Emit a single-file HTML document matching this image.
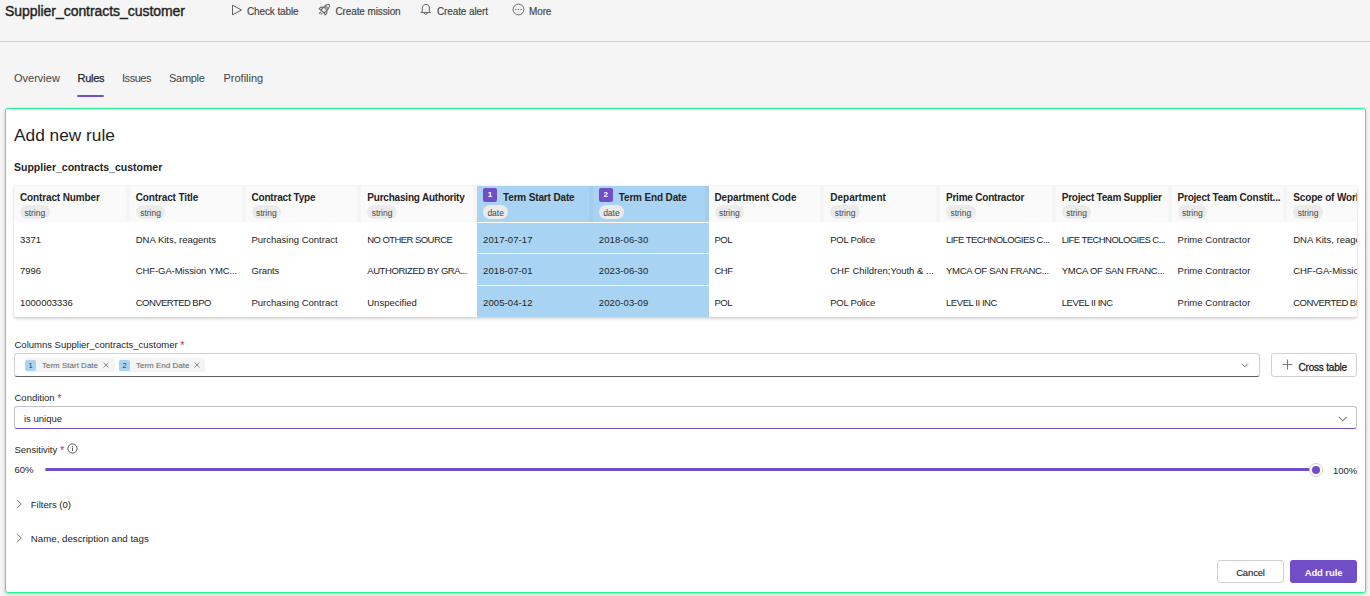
<!DOCTYPE html>
<html><head><meta charset="utf-8">
<style>
*{box-sizing:border-box;margin:0;padding:0}
html,body{width:1370px;height:596px;overflow:hidden;background:#f5f5f5;font-family:"Liberation Sans",sans-serif;color:#242424}
.a{position:absolute;white-space:nowrap}
.title{left:5px;top:1px;font-size:14px;font-weight:400;letter-spacing:-0.05px;-webkit-text-stroke:0.4px #242424;color:#242424;line-height:20px}
.tb{font-size:10px;color:#424242;top:4.8px;line-height:14px;letter-spacing:-0.12px;-webkit-text-stroke:0.15px #424242}
.hline{left:0;top:41px;width:1370px;height:1px;background:#d1d1d1}
.tab{font-size:11px;color:#424242;top:70px;line-height:16px}
.card{left:5px;top:108px;width:1361px;height:485px;border:1px solid #25f68d;border-radius:3px;background:#fff;box-shadow:0 0 2px rgba(0,0,0,.12),0 2px 4px rgba(0,0,0,.12)}
.h1{left:14px;top:124px;font-size:17.3px;line-height:22px;color:#242424}
.h2{left:14px;top:160px;font-size:10.5px;font-weight:700;line-height:14px;letter-spacing:0}
.tbl{left:14px;top:186px;width:1343px;height:131px;overflow:hidden;border-radius:2px;box-shadow:0 1.5px 3px rgba(0,0,0,.16),0 0 2px rgba(0,0,0,.10);background:#fff}
.col{position:absolute;top:0;width:115.75px;height:131px}
.hd{position:absolute;left:0;top:0;width:100%;height:36px;background:#fafafa}
.sep{position:absolute;right:0;top:0;width:4px;height:36px;background:#f5f5f5}
.sel .hd{background:#a9d3f2}
.sel .sep{background:#a2cdef}
.cn{position:absolute;left:6px;top:5px;font-size:10px;font-weight:700;line-height:14px;letter-spacing:-0.12px;white-space:nowrap;color:#242424}
.pill{position:absolute;left:6px;top:19px;height:14px;border-radius:7px;background:#ebebeb;font-size:8.5px;color:#474747;line-height:16px;padding:0 4.4px;white-space:nowrap}
.sel .pill{background:#ebebeb}
.bdg{position:absolute;left:6px;top:2px;width:14px;height:14px;border-radius:2px;background:#6f4ec8;color:#fff;font-size:8px;font-weight:700;line-height:14px;text-align:center}
.sel .cn{left:26px}
.r{position:absolute;left:0;width:100%;height:30px}
.sel .r{background:#a9d3f2}
.c{position:absolute;left:6px;top:2px;font-size:9.5px;line-height:30px;white-space:nowrap;color:#242424}
.lbl{font-size:9.5px;line-height:12px;color:#242424}
.req{color:#c4314b;font-size:11px;line-height:10px;position:relative;top:0.5px}
.inp{border:1px solid #d1d1d1;border-bottom-color:#616161;border-radius:3px;background:#fff}
.chip{position:absolute;top:4px;height:14px;background:#f4f4f4;border-radius:3px}
.cb{position:absolute;left:0;top:2px;width:11px;height:10.5px;background:#a9d3f2;border-radius:2px;font-size:7.5px;color:#0f3a66;text-align:center;line-height:11.5px}
.ct{position:absolute;left:17px;top:0;font-size:8px;color:#616161;line-height:16px;white-space:nowrap}
.btn{border:1px solid #d1d1d1;border-radius:3px;background:#fff}
</style></head><body>
<div class="a title">Supplier_contracts_customer</div>

<!-- toolbar -->
<svg class="a" style="left:231px;top:4px" width="12" height="12" viewBox="0 0 12 12"><path d="M1.5 1.2 L10.5 6 L1.5 10.8 Z" fill="none" stroke="#616161" stroke-width="1" stroke-linejoin="round"/></svg>
<div class="a tb" style="left:247px">Check table</div>
<svg class="a" style="left:315px;top:0px" width="20" height="20" viewBox="0 0 20 20"><g fill="none" stroke="#5a5a5a" stroke-width="0.95" stroke-linejoin="round" stroke-linecap="round" transform="rotate(45 10.3 8.7)"><path d="M8 12.6 L8 7.6 C8 5.2 9 3.8 10.3 3 C11.6 3.8 12.6 5.2 12.6 7.6 L12.6 12.6 Z"/><path d="M8 9 L6 10.8 L6 13.2 L8 12.6 M12.6 9 L14.6 10.8 L14.6 13.2 L12.6 12.6"/><circle cx="10.3" cy="7.6" r="1.2"/><path d="M9.4 14.2 L9.4 16.4 M11.2 14.2 L11.2 15.6"/></g></svg>
<div class="a tb" style="left:335.5px">Create mission</div>
<svg class="a" style="left:415px;top:0px" width="20" height="20" viewBox="0 0 20 20"><g fill="none" stroke="#5a5a5a" stroke-width="0.95" stroke-linejoin="round" stroke-linecap="round"><path d="M7.3 11.3 L7.3 8.1 C7.3 5.9 8.8 4.4 10.8 4.4 C12.8 4.4 14.4 5.9 14.4 8.1 L14.4 11.3 L15.5 12.6 L6.2 12.6 Z"/><path d="M9.4 13.5 C9.7 14.7 11.9 14.7 12.2 13.5"/></g></svg>
<div class="a tb" style="left:437px">Create alert</div>
<svg class="a" style="left:511.5px;top:3.2px" width="13" height="13" viewBox="0 0 13 13"><circle cx="6.5" cy="6.5" r="5.4" fill="none" stroke="#5a5a5a" stroke-width="0.9"/><circle cx="3.8" cy="6.5" r="0.75" fill="#6a6a6a"/><circle cx="6.5" cy="6.5" r="0.75" fill="#6a6a6a"/><circle cx="9.2" cy="6.5" r="0.75" fill="#6a6a6a"/></svg>
<div class="a tb" style="left:529px">More</div>

<div class="a hline"></div>

<!-- tabs -->
<div class="a tab" style="left:14px">Overview</div>
<div class="a tab" style="left:77.5px;color:#242424;letter-spacing:-0.25px;-webkit-text-stroke:0.25px #242424">Rules</div>
<div class="a" style="left:77px;top:95px;width:27px;height:2px;background:#6f4ec8;border-radius:1px"></div>
<div class="a tab" style="left:122px;letter-spacing:-0.45px">Issues</div>
<div class="a tab" style="left:169px;letter-spacing:-0.28px">Sample</div>
<div class="a tab" style="left:223.5px">Profiling</div>

<div class="a card"></div>
<div class="a h1">Add new rule</div>
<div class="a h2">Supplier_contracts_customer</div>

<div class="a tbl" id="tbl">
<div class="col" style="left:0.00px"><div class="hd"><div class="sep"></div><div class="cn" style="letter-spacing:-0.13px">Contract Number</div><div class="pill">string</div></div><div class="r" style="top:37px;height:30px"><div class="c">3371</div></div><div class="r" style="top:68px;height:31px"><div class="c">7996</div></div><div class="r" style="top:100px;height:31px"><div class="c">1000003336</div></div></div>
<div class="col" style="left:115.75px"><div class="hd"><div class="sep"></div><div class="cn" style="letter-spacing:-0.13px">Contract Title</div><div class="pill">string</div></div><div class="r" style="top:37px;height:30px"><div class="c">DNA Kits, reagents</div></div><div class="r" style="top:68px;height:31px"><div class="c" style="letter-spacing:-0.09px">CHF-GA-Mission YMC...</div></div><div class="r" style="top:100px;height:31px"><div class="c" style="letter-spacing:-0.55px">CONVERTED BPO</div></div></div>
<div class="col" style="left:231.50px"><div class="hd"><div class="sep"></div><div class="cn" style="letter-spacing:-0.2px">Contract Type</div><div class="pill">string</div></div><div class="r" style="top:37px;height:30px"><div class="c">Purchasing Contract</div></div><div class="r" style="top:68px;height:31px"><div class="c" style="letter-spacing:-0.15px">Grants</div></div><div class="r" style="top:100px;height:31px"><div class="c">Purchasing Contract</div></div></div>
<div class="col" style="left:347.25px"><div class="hd"><div class="sep"></div><div class="cn" style="letter-spacing:-0.2px">Purchasing Authority</div><div class="pill">string</div></div><div class="r" style="top:37px;height:30px"><div class="c" style="letter-spacing:-0.56px">NO OTHER SOURCE</div></div><div class="r" style="top:68px;height:31px"><div class="c" style="letter-spacing:-0.42px">AUTHORIZED BY GRA...</div></div><div class="r" style="top:100px;height:31px"><div class="c" style="letter-spacing:0px">Unspecified</div></div></div>
<div class="col sel" style="left:463.00px"><div class="hd"><div class="sep"></div><div class="bdg">1</div><div class="cn" style="letter-spacing:-0.15px">Term Start Date</div><div class="pill">date</div></div><div class="r" style="top:37px;height:30px"><div class="c" style="letter-spacing:0.1px">2017-07-17</div></div><div class="r" style="top:68px;height:31px"><div class="c" style="letter-spacing:0.1px">2018-07-01</div></div><div class="r" style="top:100px;height:31px"><div class="c" style="letter-spacing:0.1px">2005-04-12</div></div></div>
<div class="col sel" style="left:578.75px"><div class="hd"><div class="sep"></div><div class="bdg">2</div><div class="cn" style="letter-spacing:-0.15px">Term End Date</div><div class="pill">date</div></div><div class="r" style="top:37px;height:30px"><div class="c" style="letter-spacing:0.1px">2018-06-30</div></div><div class="r" style="top:68px;height:31px"><div class="c" style="letter-spacing:0.1px">2023-06-30</div></div><div class="r" style="top:100px;height:31px"><div class="c" style="letter-spacing:0.1px">2020-03-09</div></div></div>
<div class="col" style="left:694.50px"><div class="hd"><div class="sep"></div><div class="cn" style="letter-spacing:-0.1px">Department Code</div><div class="pill">string</div></div><div class="r" style="top:37px;height:30px"><div class="c" style="letter-spacing:-0.5px">POL</div></div><div class="r" style="top:68px;height:31px"><div class="c" style="letter-spacing:-0.5px">CHF</div></div><div class="r" style="top:100px;height:31px"><div class="c" style="letter-spacing:-0.5px">POL</div></div></div>
<div class="col" style="left:810.25px"><div class="hd"><div class="sep"></div><div class="cn" style="letter-spacing:0px">Department</div><div class="pill">string</div></div><div class="r" style="top:37px;height:30px"><div class="c" style="letter-spacing:-0.25px">POL Police</div></div><div class="r" style="top:68px;height:31px"><div class="c">CHF Children;Youth &amp; ...</div></div><div class="r" style="top:100px;height:31px"><div class="c" style="letter-spacing:-0.25px">POL Police</div></div></div>
<div class="col" style="left:926.00px"><div class="hd"><div class="sep"></div><div class="cn" style="letter-spacing:-0.22px">Prime Contractor</div><div class="pill">string</div></div><div class="r" style="top:37px;height:30px"><div class="c" style="letter-spacing:-0.56px">LIFE TECHNOLOGIES C...</div></div><div class="r" style="top:68px;height:31px"><div class="c" style="letter-spacing:-0.27px">YMCA OF SAN FRANC...</div></div><div class="r" style="top:100px;height:31px"><div class="c" style="letter-spacing:-0.43px">LEVEL II INC</div></div></div>
<div class="col" style="left:1041.75px"><div class="hd"><div class="sep"></div><div class="cn" style="letter-spacing:-0.23px">Project Team Supplier</div><div class="pill">string</div></div><div class="r" style="top:37px;height:30px"><div class="c" style="letter-spacing:-0.56px">LIFE TECHNOLOGIES C...</div></div><div class="r" style="top:68px;height:31px"><div class="c" style="letter-spacing:-0.27px">YMCA OF SAN FRANC...</div></div><div class="r" style="top:100px;height:31px"><div class="c" style="letter-spacing:-0.43px">LEVEL II INC</div></div></div>
<div class="col" style="left:1157.50px"><div class="hd"><div class="sep"></div><div class="cn" style="letter-spacing:-0.21px">Project Team Constit...</div><div class="pill">string</div></div><div class="r" style="top:37px;height:30px"><div class="c" style="letter-spacing:0.07px">Prime Contractor</div></div><div class="r" style="top:68px;height:31px"><div class="c" style="letter-spacing:0.07px">Prime Contractor</div></div><div class="r" style="top:100px;height:31px"><div class="c" style="letter-spacing:0.07px">Prime Contractor</div></div></div>
<div class="col" style="left:1273.25px"><div class="hd"><div class="sep"></div><div class="cn" style="letter-spacing:-0.15px">Scope of Work</div><div class="pill">string</div></div><div class="r" style="top:37px;height:30px"><div class="c">DNA Kits, reagents</div></div><div class="r" style="top:68px;height:31px"><div class="c" style="letter-spacing:-0.09px">CHF-GA-Mission YMCA</div></div><div class="r" style="top:100px;height:31px"><div class="c" style="letter-spacing:-0.55px">CONVERTED BPO</div></div></div>
</div>
<!-- Columns field -->
<div class="a lbl" style="left:14.5px;top:339px">Columns Supplier_contracts_customer <span class="req">*</span></div>
<div class="a inp" style="left:14px;top:353px;width:1246px;height:24px">
  <div class="chip" style="left:10px;width:90px"><div class="cb">1</div><div class="ct">Term Start Date</div>
    <svg style="position:absolute;left:78.2px;top:4.2px" width="6" height="6" viewBox="0 0 6 6"><path d="M0.5 0.5 L5.5 5.5 M5.5 0.5 L0.5 5.5" stroke="#757575" stroke-width="0.8"/></svg></div>
  <div class="chip" style="left:104px;width:86px"><div class="cb">2</div><div class="ct">Term End Date</div>
    <svg style="position:absolute;left:75.3px;top:4.2px" width="6" height="6" viewBox="0 0 6 6"><path d="M0.5 0.5 L5.5 5.5 M5.5 0.5 L0.5 5.5" stroke="#757575" stroke-width="0.8"/></svg></div>
  <svg style="position:absolute;left:1226px;top:8.7px" width="8" height="5" viewBox="0 0 8 5"><path d="M0.6 0.6 L3.8 3.8 L7 0.6" fill="none" stroke="#616161" stroke-width="0.9"/></svg>
</div>
<div class="a btn" style="left:1271px;top:353px;width:86px;height:24px">
  <svg style="position:absolute;left:9.7px;top:5.2px" width="11" height="11" viewBox="0 0 11 11"><path d="M5.5 0.5 V10.5 M0.5 5.5 H10.5" stroke="#7a7a7a" stroke-width="1.1"/></svg>
  <div style="position:absolute;left:26.5px;top:6.6px;font-size:10px;font-weight:400;-webkit-text-stroke:0.3px #242424;letter-spacing:-0.2px;line-height:14px;color:#242424;white-space:nowrap">Cross table</div>
</div>

<!-- Condition -->
<div class="a lbl" style="left:14.5px;top:392px">Condition <span class="req">*</span></div>
<div class="a inp" style="left:14px;top:406px;width:1343px;height:23px;border-color:#c2c2c2;border-bottom:1px solid #6f4ec8">
  <div style="position:absolute;left:9px;top:4.5px;font-size:9.5px;line-height:14px;color:#242424">is unique</div>
  <svg style="position:absolute;left:1322.6px;top:8.8px" width="10" height="6" viewBox="0 0 10 6"><path d="M0.8 0.8 L4.8 4.8 L8.8 0.8" fill="none" stroke="#7a7a7a" stroke-width="1.05"/></svg>
</div>

<!-- Sensitivity -->
<div class="a lbl" style="left:14.5px;top:444px">Sensitivity <span class="req">*</span></div>
<svg class="a" style="left:67px;top:443.2px" width="11" height="11" viewBox="0 0 11 11"><circle cx="5.5" cy="5.5" r="4.6" fill="none" stroke="#424242" stroke-width="0.9"/><path d="M5.5 4.6 V8" stroke="#424242" stroke-width="0.9"/><circle cx="5.5" cy="3.2" r="0.55" fill="#424242"/></svg>
<div class="a lbl" style="left:14.5px;top:464px">60%</div>
<div class="a" style="left:45px;top:468px;width:1271px;height:3px;background:#6f4ec8;border-radius:2px"></div>
<div class="a" style="left:1308.5px;top:462.5px;width:14px;height:14px;border-radius:50%;background:#fff;border:1px solid #d1d1d1"></div>
<div class="a" style="left:1311.8px;top:465.8px;width:8.2px;height:8.2px;border-radius:50%;background:#6f4ec8"></div>
<div class="a lbl" style="left:1333px;top:465px">100%</div>

<!-- Filters -->
<svg class="a" style="left:16px;top:499px" width="7" height="10" viewBox="0 0 7 10"><path d="M1 0.8 L5.2 5 L1 9.2" fill="none" stroke="#616161" stroke-width="0.9"/></svg>
<div class="a lbl" style="left:30.8px;top:499px">Filters (0)</div>
<svg class="a" style="left:16px;top:533px" width="7" height="10" viewBox="0 0 7 10"><path d="M1 0.8 L5.2 5 L1 9.2" fill="none" stroke="#616161" stroke-width="0.9"/></svg>
<div class="a lbl" style="left:30.8px;top:532.5px;font-size:9.7px">Name, description and tags</div>

<!-- Buttons -->
<div class="a btn" style="left:1217px;top:560px;width:67px;height:23px">
  <div style="position:absolute;left:0;width:100%;top:4.5px;text-align:center;font-size:9.5px;line-height:14px;color:#242424;letter-spacing:-0.15px;-webkit-text-stroke:0.12px #242424">Cancel</div>
</div>
<div class="a" style="left:1290px;top:560px;width:67px;height:23px;background:#6f4ec8;border-radius:3px">
  <div style="position:absolute;left:0;width:100%;top:5.5px;text-align:center;font-size:9.5px;font-weight:700;line-height:14px;color:#fff;letter-spacing:-0.1px">Add rule</div>
</div>


</body></html>
